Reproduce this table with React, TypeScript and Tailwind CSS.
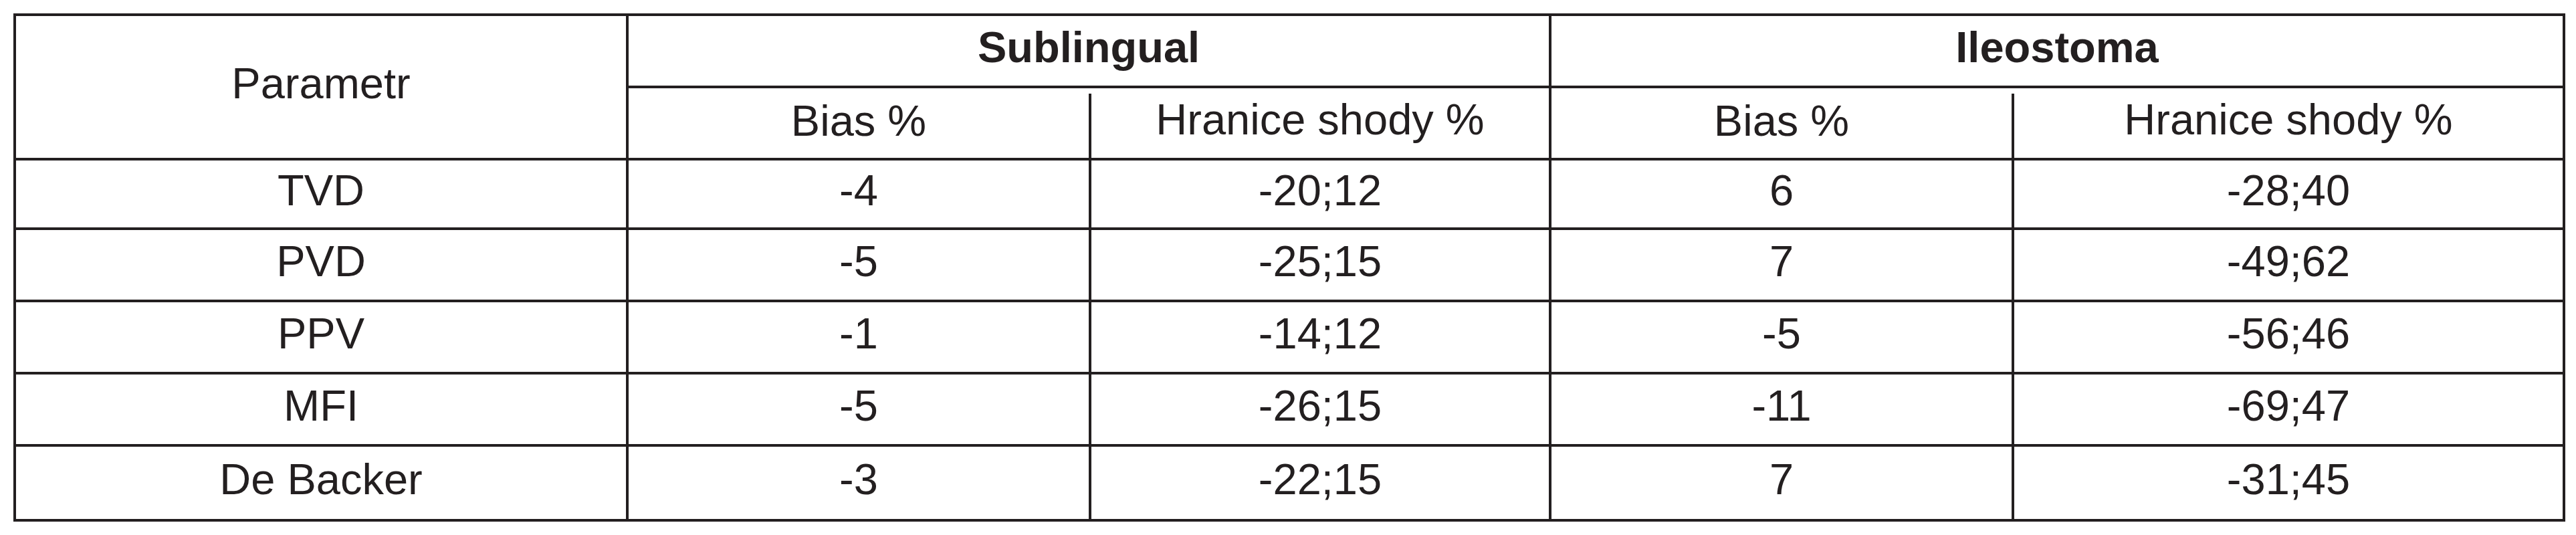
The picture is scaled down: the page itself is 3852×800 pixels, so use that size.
const rows = [
  { name: 'TVD', sBias: '-4', sRange: '-20;12', iBias: '6', iRange: '-28;40', h: 'h-[104px]' },
  { name: 'PVD', sBias: '-5', sRange: '-25;15', iBias: '7', iRange: '-49;62', h: 'h-[108px]' },
  { name: 'PPV', sBias: '-1', sRange: '-14;12', iBias: '-5', iRange: '-56;46', h: 'h-[108px]' },
  { name: 'MFI', sBias: '-5', sRange: '-26;15', iBias: '-11', iRange: '-69;47', h: 'h-[108px]' },
  { name: 'De Backer', sBias: '-3', sRange: '-22;15', iBias: '7', iRange: '-31;45', h: 'h-[112px]' },
];

const cell = 'flex items-center justify-center border-r-4 border-b-4 border-[#231f20] pb-3';

export default function App() {
  return (
    <div className="min-h-[800px] w-[3852px] bg-white p-5 text-[65px] leading-none text-[#231f20] [font-family:'Liberation_Sans',Arial,sans-serif]">
      <div className="grid w-[3816px] grid-cols-[916px_692px_688px_692px_824px] border-l-4 border-t-4 border-[#231f20]">
        {/* header */}
        <div className={`${cell} row-span-2 h-[216px] pb-1`}>Parametr</div>
        <div className={`${cell} col-span-2 h-[108px] pb-2 font-bold`}>Sublingual</div>
        <div className={`${cell} col-span-2 h-[108px] pb-2 font-bold`}>Ileostoma</div>
        <div className="flex h-[108px] flex-col border-b-4 border-[#231f20] pt-2">
          <div className="flex flex-1 items-center justify-center border-r-4 border-[#231f20] pb-4">Bias %</div>
        </div>
        <div className={`${cell} h-[108px] pb-2`}>Hranice shody %</div>
        <div className="flex h-[108px] flex-col border-b-4 border-[#231f20] pt-2">
          <div className="flex flex-1 items-center justify-center border-r-4 border-[#231f20] pb-4">Bias %</div>
        </div>
        <div className={`${cell} h-[108px] pb-2`}>Hranice shody %</div>

        {rows.map(r => (
          <div key={r.name} className="contents">
            <div className={`${cell} ${r.h}`}>{r.name}</div>
            <div className={`${cell} ${r.h}`}>{r.sBias}</div>
            <div className={`${cell} ${r.h}`}>{r.sRange}</div>
            <div className={`${cell} ${r.h}`}>{r.iBias}</div>
            <div className={`${cell} ${r.h}`}>{r.iRange}</div>
          </div>
        ))}
      </div>
    </div>
  );
}
